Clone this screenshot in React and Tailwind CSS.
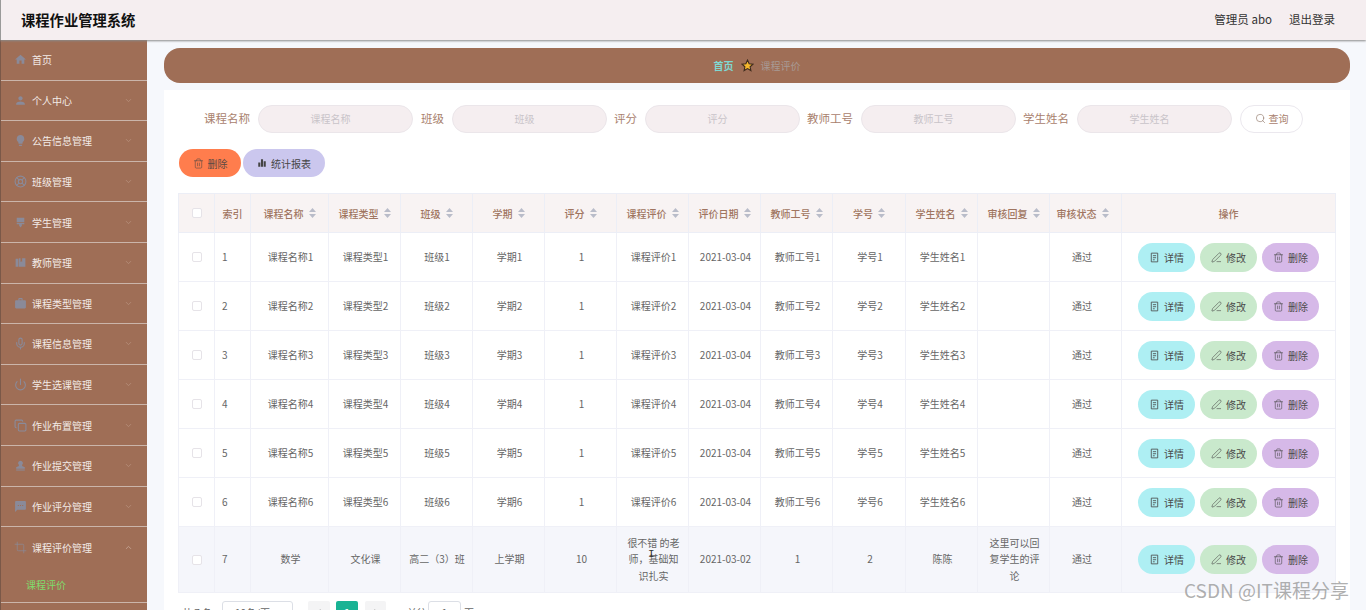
import {
  ChevronDown, ChevronLeft, ChevronRight, ChevronUp, Copy, Crop, LifeBuoy, Mic, PenLine, Power, Search, Trash2,
} from 'lucide-react'
import { MdHome, MdLightbulb, MdPerson, MdSms, MdWork } from 'react-icons/md'

function BrushIcon({ className }) {
  return (
    <svg className={className} viewBox="0 0 24 24" fill="currentColor">
      <path d="M5 3h14v8H5zM5 12.500h14V15h-4.500v3L12 21l-2.500-3v-3H5z" />
    </svg>
  )
}

function BooksIcon({ className }) {
  return (
    <svg className={className} viewBox="0 0 24 24" fill="currentColor">
      <path d="M3 5h5v15H3zM9 4h3v7l1.500-1.500L15 11V4h6v16H9z" />
    </svg>
  )
}

function StampIcon({ className }) {
  return (
    <svg className={className} viewBox="0 0 24 24" fill="currentColor">
      <path d="M12 3a4.500 4.500 0 0 1 3 7.800V13l5 2v3H4v-3l5-2v-2.200A4.500 4.500 0 0 1 12 3zM4 19.500h16V21H4z" />
    </svg>
  )
}

function TicketsIcon({ size = 11 }) {
  return (
    <svg width={size} height={size} viewBox="0 0 24 24" fill="none" stroke="currentColor" strokeWidth="1.800">
      <path d="M5 2.500h14v19H5zM8.500 8h7M8.500 12.500h7M8.500 17h4" />
    </svg>
  )
}

function BarsIcon({ size = 11 }) {
  return (
    <svg width={size} height={size} viewBox="0 0 24 24" fill="currentColor">
      <path d="M3 11h5v10H3zM9.500 3h5v18h-5zM16 8h5v13h-5z" />
    </svg>
  )
}

const menu = [
  ['首页', MdHome, 'none'],
  ['个人中心', MdPerson],
  ['公告信息管理', MdLightbulb],
  ['班级管理', LifeBuoy],
  ['学生管理', BrushIcon],
  ['教师管理', BooksIcon],
  ['课程类型管理', MdWork],
  ['课程信息管理', Mic],
  ['学生选课管理', Power],
  ['作业布置管理', Copy],
  ['作业提交管理', StampIcon],
  ['作业评分管理', MdSms],
]

const searchFields = ['课程名称', '班级', '评分', '教师工号', '学生姓名']

const columns = [
  ['索引', 36, false],
  ['课程名称', 78, true],
  ['课程类型', 72, true],
  ['班级', 72, true],
  ['学期', 72, true],
  ['评分', 72, true],
  ['课程评价', 72, true],
  ['评价日期', 72, true],
  ['教师工号', 72, true],
  ['学号', 73, true],
  ['学生姓名', 72, true],
  ['审核回复', 72, true],
  ['审核状态', 72, true],
]

const rows = [1, 2, 3, 4, 5, 6].map((n) => [
  n, `课程名称${n}`, `课程类型${n}`, `班级${n}`, `学期${n}`, 1, `课程评价${n}`, '2021-03-04',
  `教师工号${n}`, `学号${n}`, `学生姓名${n}`, '', '通过',
])
rows.push([
  7, '数学', '文化课', '高二（3）班', '上学期', 10, '很不错 的老师，基础知识扎实', '2021-03-02', 1, 2, '陈陈',
  '这里可以回复学生的评论', '通过',
])

function SortCaret() {
  return (
    <svg className="w-[7px] h-[10px] text-[#b9bcc9]" viewBox="0 0 7 10" fill="currentColor">
      <path d="M3.500 0 7 4H0zM0 6h7l-3.500 4z" />
    </svg>
  )
}

function Checkbox() {
  return <span className="block mx-auto w-[10px] h-[10px] bg-white border border-[#e6e3e8] rounded-[2px]" />
}

function RowButton({ icon: Icon, label, color }) {
  return (
    <button className={`w-[57px] h-[29px] rounded-full flex items-center justify-center gap-[4px] text-[10px] text-[#4a4a4a] ${color}`}>
      <Icon size={11} strokeWidth={1.3} />
      {label}
    </button>
  )
}

function cellClass(c) {
  if (c === 0) return 'pl-[7px] text-left'
  if (c === 3) return 'pl-[1px] text-center whitespace-nowrap'
  if (c === 12) return 'pl-[3px] pr-[10px] text-center'
  return 'pl-[10px] pr-[8px] text-center'
}

function Sidebar() {
  return (
    <aside className="w-[147px] shrink-0 bg-[#9f6e56] border-l border-[#7a5848] text-[10px] text-[#f3ebe7]">
      {menu.map(([label, Icon, arrow]) => (
        <div key={label} className="h-[40.600px] flex items-center border-b border-[#cbb5aa]">
          <span className="w-[31px] flex justify-center pl-[7px]">
            <Icon className="w-[13px] h-[13px] text-[#8a8a99]" />
          </span>
          <span className="flex-1">{label}</span>
          {arrow !== 'none' && <ChevronDown size={9} className="mr-[14px] text-[#b8917d]" />}
        </div>
      ))}
      <div className="h-[76px] border-b border-[#cbb5aa]">
        <div className="h-[40px] flex items-center">
          <span className="w-[31px] flex justify-center pl-[7px]">
            <Crop className="w-[13px] h-[13px] text-[#8a8a99]" strokeWidth={1.3} />
          </span>
          <span className="flex-1">课程评价管理</span>
          <ChevronUp size={9} className="mr-[14px] text-[#c9ab9c]" />
        </div>
        <div className="h-[36px] pl-[25px] pt-[10px] text-[#80dc6c]">课程评价</div>
      </div>
    </aside>
  )
}

function SearchBar() {
  return (
    <div className="flex items-center pl-[26px] gap-[7px] h-[28px]">
      {searchFields.map((label, i) => (
        <div key={label} className={`flex items-center gap-[8px] ${i === 1 ? 'ml-[1px]' : ''}`}>
          <span className="text-[11.500px] text-[#a9816d]">{label}</span>
          <div className="w-[155px] h-[28px] rounded-full bg-[#f5eef0] border border-[#ebe6ea] flex items-center justify-center pr-[10px] pb-[2px] text-[10px] text-[#c9c4c9]">
            {label}
          </div>
        </div>
      ))}
      <button className="ml-[1px] w-[63px] h-[28px] rounded-full bg-white border border-[#ebe8ee] flex items-center justify-center gap-[3px] pb-[1px] text-[10px] text-[#a9816d]">
        <Search size={11} strokeWidth={1.3} className="text-[#8b6f60]" />
        查询
      </button>
    </div>
  )
}

function DataTable() {
  return (
    <table className="w-[1157px] table-fixed border-collapse text-[10px] text-[#666] mt-[16px]">
      <colgroup>
        <col className="w-[36px]" />
        {columns.map(([title, width]) => (
          <col key={title} style={{ width }} />
        ))}
        <col className="w-[214px]" />
      </colgroup>
      <thead>
        <tr className="h-[39px] bg-[#f8f3f3] text-[#a07560]">
          <th className="border border-[#eceef6]"><Checkbox /></th>
          {columns.map(([title, , sortable], c) => (
            <th key={title} className={`border border-[#eceef6] font-medium ${c === 12 ? 'pr-[6px]' : ''}`}>
              <span className="inline-flex items-center justify-center gap-[5px]">
                {title}
                {sortable && <SortCaret />}
              </span>
            </th>
          ))}
          <th className="border border-[#eceef6] font-medium">操作</th>
        </tr>
      </thead>
      <tbody>
        {rows.map((row, i) => (
          <tr key={row[0]} className={i === 6 ? 'h-[66px] bg-[#f5f6fb]' : 'h-[49px] bg-white'}>
            <td className="border border-[#eff0f7]"><Checkbox /></td>
            {row.map((cell, c) => (
              <td key={c} className={`border border-[#eff0f7] leading-[16.500px] ${cellClass(c)}`}>
                {cell}
              </td>
            ))}
            <td className="border border-[#eff0f7]">
              <div className="flex justify-center gap-[5px]">
                <RowButton icon={TicketsIcon} label="详情" color="bg-[#aeeff3]" />
                <RowButton icon={PenLine} label="修改" color="bg-[#c9e9cc]" />
                <RowButton icon={Trash2} label="删除" color="bg-[#d6b9e8]" />
              </div>
            </td>
          </tr>
        ))}
      </tbody>
    </table>
  )
}

function Pagination() {
  return (
    <div className="flex items-start h-[24px] mt-[8px] pl-[4px] text-[10px] text-[#666]">
      <span className="w-[40px] pt-[4px]">共 7 条</span>
      <div className="w-[71px] h-[24px] border border-[#dcdfe6] rounded-[3px] flex justify-center pt-[3px] pr-[10px]">10条/页</div>
      <span className="ml-[15px] w-[22px] h-[24px] bg-[#f4f4f5] rounded-[2px] flex justify-center pt-[6px] text-[#aaa]"><ChevronLeft size={10} /></span>
      <span className="ml-[6px] w-[22px] h-[24px] bg-[#19b394] text-white font-bold rounded-[2px] flex justify-center pt-[4px]">1</span>
      <span className="ml-[7px] w-[21px] h-[24px] bg-[#f4f4f5] rounded-[2px] flex justify-center pt-[6px] text-[#aaa]"><ChevronRight size={10} /></span>
      <span className="ml-[21px] pt-[4px]">前往</span>
      <div className="ml-[1px] w-[33px] h-[24px] border border-[#dcdfe6] rounded-[3px] flex justify-center pt-[3px]">1</div>
      <span className="ml-[3px] pt-[4px]">页</span>
    </div>
  )
}

export default function App() {
  return (
    <div className="relative w-[1366px] h-[610px] overflow-hidden flex flex-col bg-[#f6f8fc] font-['Noto_Sans_CJK_SC','Noto_Sans',sans-serif]">
      <header className="relative z-10 h-[40px] shrink-0 bg-[#f5eef0] border-l border-[#9a9a9a] shadow-[0_1px_2px_#8a8a8a] flex items-center justify-between pl-[20px] pr-[31px]">
        <h1 className="text-[14.300px] font-bold text-[#111]">课程作业管理系统</h1>
        <div className="flex items-center gap-[17px] text-[11.500px] text-[#333]">
          <span>管理员 abo</span>
          <span>退出登录</span>
        </div>
      </header>
      <div className="flex flex-1 min-h-0">
        <Sidebar />
        <main className="flex-1 pl-[17px] pr-[16px] pt-[8px]">
          <div className="h-[35px] rounded-[16px] bg-[#9f6e56] flex items-center justify-center gap-[7px] text-[10px]">
            <span className="font-bold text-[#7fd8d2]">首页</span>
            <svg className="w-[13px] h-[13px]" viewBox="0 0 24 24" fill="#f5b82e" stroke="#3d2a1c" strokeWidth="2">
              <path d="m12 2 3 6.700 7.200.8-5.400 4.800 1.500 7.100L12 17.800l-6.300 3.600 1.500-7.100L1.800 9.500 9 8.700z" />
            </svg>
            <span className="text-[#a89a94]">课程评价</span>
          </div>
          <div className="mt-[7px] h-[600px] bg-white pt-[15px] pl-[14px]">
            <SearchBar />
            <div className="flex gap-[2px] mt-[16px] ml-[1px] text-[10px] text-[#5a4a44]">
              <button className="w-[62px] h-[28px] rounded-full bg-[#ff7d4d] flex items-center justify-center gap-[4px]">
                <Trash2 size={11} strokeWidth={1.3} />
                删除
              </button>
              <button className="w-[82px] h-[28px] rounded-full bg-[#cbc7ee] flex items-center justify-center gap-[4px] text-[#444]">
                <BarsIcon size={10} />
                统计报表
              </button>
            </div>
            <DataTable />
            <Pagination />
          </div>
        </main>
      </div>
      <span className="absolute left-[648px] top-[549px] text-[11px] leading-none text-[#333] font-['Liberation_Mono',monospace]">I</span>
      <span className="absolute left-[1184px] top-[577px] text-[19px] leading-[26px] text-[#9a9a9a]/80">CSDN @IT课程分享</span>
    </div>
  )
}
